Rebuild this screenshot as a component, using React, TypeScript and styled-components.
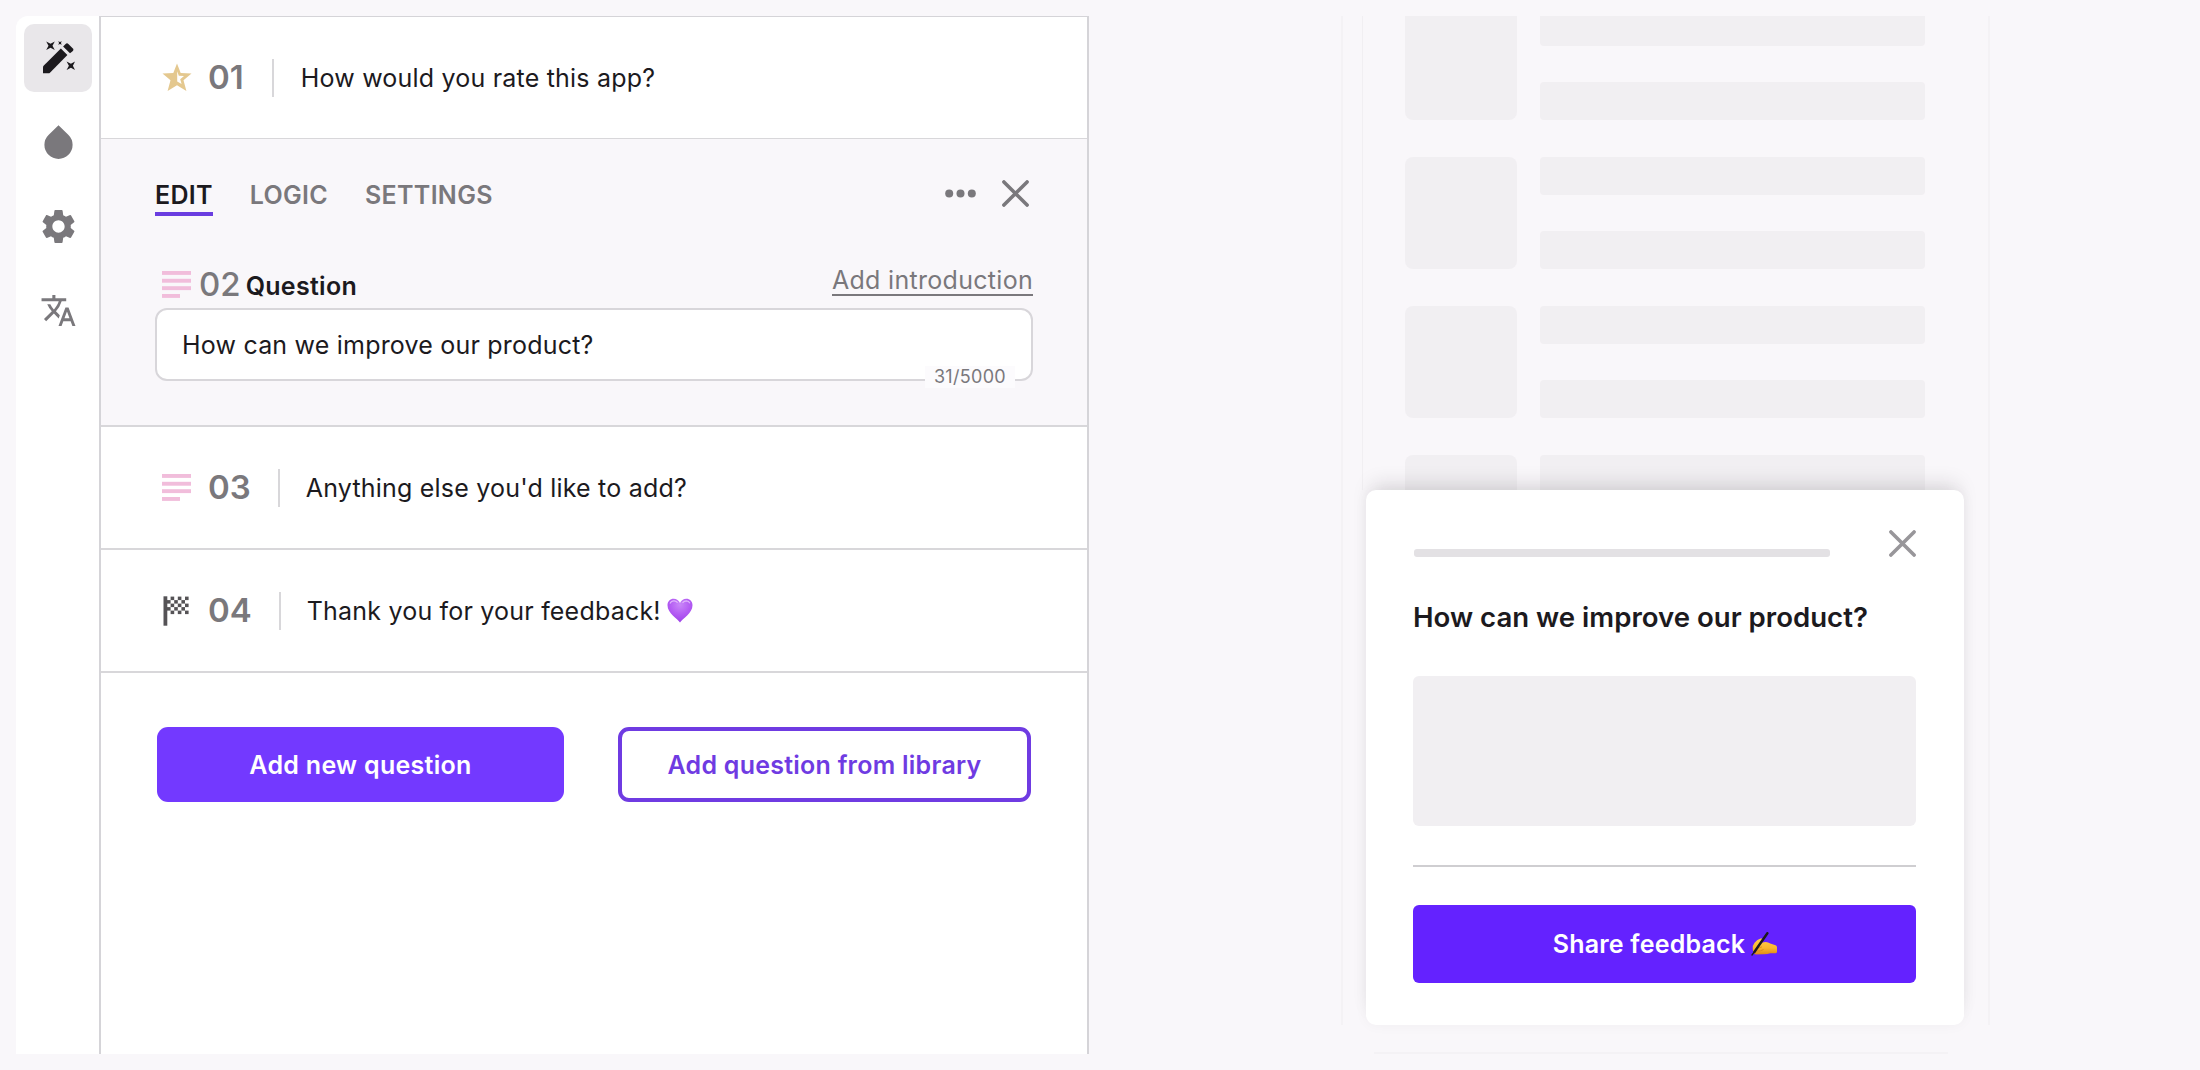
import { ReactNode } from 'react';
import styled, { createGlobalStyle } from 'styled-components';
import { MdSettings, MdTranslate } from 'react-icons/md';

// Data
const TABS = ['EDIT', 'LOGIC', 'SETTINGS'];
const FEED_ROWS = [0, 1, 2, 3];
const FLAG_ROWS = [0, 1, 2, 3, 4];
const FLAG_COLS = [0, 1, 2, 3, 4, 5];

// Icons
const WandIcon = () => (
  <svg width="34" height="34" viewBox="0 0 34 34" fill="#1c1a1e">
    <path d="M2 32.3V26.2Q2 25.4 2.6 24.8L19.9 7.6L26.4 14.1L9.2 31.4Q8.3 32.3 7.4 32.3Z" />
    <path d="M22.1 5.4L24.6 2.9Q26 1.7 27.4 2.9L31.9 7.4Q33.1 8.8 31.9 10.1L29 12.2Z" />
    <path d="M5.2 0.4L9.5 2.7L13.8 0.4L11.5 4.7L13.8 9L9.5 6.7L5.2 9L7.5 4.7Z" />
    <path d="M17.2 0.2L19 1.1L20.8 0.2L19.9 2L20.8 3.8L19 2.9L17.2 3.8L18.1 2Z" />
    <path d="M25.6 20.5L29.9 22.8L34 20.5L31.9 24.8L34 29L29.9 26.8L25.6 29L27.9 24.8Z" />
  </svg>
);

const DropIcon = () => (
  <svg width="29" height="34" viewBox="0 0 29 34" fill="#7a787c">
    <path d="M14.5 0.2L24.5 9.9A14.1 14.1 0 1 1 4.5 9.9Z" />
  </svg>
);

const StarIcon = () => (
  <svg width="30" height="29" viewBox="0 0 30 29">
    <path
      d="M15 0.5L18.7 9.9L29.5 10.4L21.5 17.3L24.4 28L15 22.2L5.6 28L8.5 17.3L0.5 10.4L11.3 9.9Z"
      fill="#e4c88f"
    />
    <path d="M15.2 8.2L16.8 12.7L22 13L18.2 16.2L19.6 21L15.2 18.4Z" fill="#fff" />
  </svg>
);

const LinesIcon = () => (
  <svg width="29" height="27" viewBox="0 0 29 27" fill="#f1bddb">
    <rect width="29" height="3.9" />
    <rect y="7.8" width="29" height="3.9" />
    <rect y="15.2" width="29" height="3.9" />
    <rect y="23" width="18" height="3.9" />
  </svg>
);

const FlagIcon = () => (
  <svg width="29" height="30" viewBox="0 0 29 30" fill="#555356">
    <rect x="1.5" y="0.3" width="3.8" height="29.4" />
    {FLAG_ROWS.map((row) =>
      FLAG_COLS.filter((col) => (row + col) % 2 === 1).map((col) => (
        <rect key={`${row}-${col}`} x={5 + col * 3.6} y={0.6 + row * 3.5} width="3.6" height="3.5" />
      ))
    )}
  </svg>
);

const HeartIcon = () => (
  <svg width="26" height="25" viewBox="0 0 26 25" role="img" aria-label="purple heart">
    <defs>
      <radialGradient id="heart" cx="0.5" cy="0.25" r="0.75">
        <stop offset="0" stopColor="#c987f8" />
        <stop offset="0.55" stopColor="#b35bf3" />
        <stop offset="1" stopColor="#9d41e8" />
      </radialGradient>
    </defs>
    <path
      d="M13 24.5C10.5 20.5 0.5 15.5 0.5 7.3C0.5 3.4 3.3 0.8 6.7 0.8C9.6 0.8 11.9 2.4 13 5C14.1 2.4 16.4 0.8 19.3 0.8C22.7 0.8 25.5 3.4 25.5 7.3C25.5 15.5 15.5 20.5 13 24.5Z"
      fill="url(#heart)"
    />
    <path d="M3 5.4Q4.3 2.6 7.2 2.8Q9.6 3 10.6 4.8" fill="none" stroke="#dfb4fb" strokeWidth="1.2" />
    <path d="M15.5 4.8Q17 2.8 19.4 2.8Q21.8 3 22.9 5.2" fill="none" stroke="#dfb4fb" strokeWidth="1.2" />
  </svg>
);

const WritingHandIcon = () => (
  <svg width="27" height="24" viewBox="0 0 27 24" role="img" aria-label="writing hand">
    <defs>
      <linearGradient id="hand" x1="0" y1="0" x2="0" y2="1">
        <stop offset="0" stopColor="#ffd04a" />
        <stop offset="0.6" stopColor="#fbb82c" />
        <stop offset="1" stopColor="#dd8a16" />
      </linearGradient>
    </defs>
    <path
      d="M1.8 17.4Q1.2 13.4 3.6 10.8Q6.2 7.6 9.6 6.6Q12.6 6 12.4 8Q12 9.6 10.6 10.8L12.8 10.2Q16.2 9.2 19.2 11.4L24.6 13.2Q26 13.8 26 15.4V20Q26 21 24.6 21.2L19.4 21.2Q16 22.4 12 22.2L4.6 22.4Q2.4 22 2.8 20Q1.8 19 1.8 17.4Z"
      fill="url(#hand)"
    />
    <path d="M11 14.8Q8.6 16.2 5.4 16M12.6 17.6Q9.6 19.4 5.6 19" fill="none" stroke="#d98a1b" strokeWidth="0.9" />
    <path d="M16.4 1.2L8 13.2L3.4 20" fill="none" stroke="#1c1a1e" strokeWidth="2.4" strokeLinecap="round" />
    <path d="M3.6 19.6L1 23" fill="none" stroke="#1c1a1e" strokeWidth="1.4" strokeLinecap="round" />
  </svg>
);

const CloseIcon = ({ color }: { color: string }) => (
  <svg width="27" height="27" viewBox="0 0 27 27" stroke={color} strokeWidth="3.6" strokeLinecap="round">
    <path d="M1.9 1.9L25.1 25.1M25.1 1.9L1.9 25.1" />
  </svg>
);

const DotsIcon = () => (
  <svg width="31" height="9" viewBox="0 0 31 9" fill="#7a787c">
    <circle cx="4.2" cy="4.5" r="4" />
    <circle cx="15.5" cy="4.5" r="4" />
    <circle cx="26.8" cy="4.5" r="4" />
  </svg>
);

// Collapsed question
interface QuestionProps {
  icon: ReactNode;
  no: string;
  text: string;
  first?: boolean;
  emoji?: ReactNode;
}

const Question = ({ icon, no, text, first, emoji }: QuestionProps) => (
  <QuestionRow $first={first}>
    <IconCell>{icon}</IconCell>
    <RowNumber>{no}</RowNumber>
    <RowDivider $first={first} />
    <RowText>{text}</RowText>
    {emoji}
  </QuestionRow>
);

export default function App() {
  return (
    <>
      <GlobalStyle />
      <Page>
        <SideBar>
          <SideButton $active>
            <WandIcon />
          </SideButton>
          <SideButton>
            <DropIcon />
          </SideButton>
          <SideButton>
            <MdSettings size={41} />
          </SideButton>
          <SideButton>
            <MdTranslate size={37} />
          </SideButton>
        </SideBar>

        <Editor>
          <Question icon={<StarIcon />} no="01" text="How would you rate this app?" first />
          <EditBlock>
            <TabBar>
              {TABS.map((tab, i) => (
                <Tab key={tab} $active={i === 0}>
                  {tab}
                </Tab>
              ))}
              <TabActions>
                <DotsIcon />
                <CloseIcon color="#7a787c" />
              </TabActions>
            </TabBar>
            <FieldHead>
              <LinesIcon />
              <FieldNumber>02</FieldNumber>
              <FieldLabel>Question</FieldLabel>
              <IntroLink>Add introduction</IntroLink>
            </FieldHead>
            <Field>
              How can we improve our product?
              <Counter>31/5000</Counter>
            </Field>
          </EditBlock>
          <Question icon={<LinesIcon />} no="03" text="Anything else you'd like to add?" />
          <Question icon={<FlagIcon />} no="04" text="Thank you for your feedback!" emoji={<HeartIcon />} />
          <ButtonBlock>
            <AddButton>Add new question</AddButton>
            <LibraryButton>Add question from library</LibraryButton>
          </ButtonBlock>
        </Editor>

        <Preview>
          <Phone>
            <Screen>
              {FEED_ROWS.map((row) => (
                <FeedRow key={row} $first={row === 0}>
                  <Thumb />
                  <Bars>
                    <Bar />
                    <Bar />
                  </Bars>
                </FeedRow>
              ))}
            </Screen>
            <Card>
              <CardHead>
                <Progress />
                <CloseIcon color="#98969a" />
              </CardHead>
              <CardTitle>How can we improve our product?</CardTitle>
              <Answer />
              <CardLine />
              <ShareButton>
                Share feedback
                <WritingHandIcon />
              </ShareButton>
            </Card>
            <PhoneEdge />
          </Phone>
        </Preview>
      </Page>
    </>
  );
}

const GlobalStyle = createGlobalStyle`
  * {
    box-sizing: border-box;
  }
  body {
    margin: 0;
    background: #f9f7fa;
    color: #1c1a1e;
    font-family: Inter, 'Liberation Sans', sans-serif;
  }
  svg {
    display: block;
    flex-shrink: 0;
  }
  button {
    padding: 0;
    border: 0;
    font-family: inherit;
    white-space: nowrap;
  }
`;

const Page = styled.main`
  display: flex;
  width: 2200px;
  height: 1070px;
  padding: 16px 0 16px 16px;
  overflow: hidden;
`;

const SideBar = styled.nav`
  display: flex;
  flex-direction: column;
  align-items: center;
  gap: 16px;
  width: 83px;
  padding: 8px 0 0 1px;
  background: #fff;
  border-radius: 12px 0 0 0;
`;

const SideButton = styled.button<{ $active?: boolean }>`
  display: flex;
  align-items: center;
  justify-content: center;
  width: 68px;
  height: 68px;
  border-radius: 10px;
  background: ${({ $active }) => ($active ? '#e9e7ea' : 'transparent')};
  color: #7a787c;
`;

const Editor = styled.section`
  width: 990px;
  background: #fff;
  border: solid #d5d4d8;
  border-width: 1px 2px 0;
`;

const QuestionRow = styled.div<{ $first?: boolean }>`
  display: flex;
  align-items: center;
  height: ${({ $first }) => ($first ? 122 : 123)}px;
  padding-left: 61px;
  border-bottom: ${({ $first }) => ($first ? 1 : 2)}px solid #d8d7da;
`;

const IconCell = styled.div`
  width: 46px;
`;

const RowNumber = styled.span`
  padding-bottom: 2px;
  color: #7a787c;
  font-size: 33px;
  font-weight: 600;
`;

const RowDivider = styled.i<{ $first?: boolean }>`
  width: 2px;
  height: 38px;
  margin: ${({ $first }) => ($first ? '0 27px 0 28px' : '0 26px 0 27px')};
  background: #d8d7da;
`;

const RowText = styled.span`
  margin-right: 6px;
  font-size: 25px;
  letter-spacing: 0.2px;
`;

const EditBlock = styled.div`
  height: 288px;
  padding: 37px 54px 0;
  background: #f9f7fa;
  border-bottom: 2px solid #d8d7da;
`;

const TabBar = styled.div`
  display: flex;
  gap: 37px;
  height: 40px;
`;

const Tab = styled.span<{ $active?: boolean }>`
  padding-top: 2px;
  color: ${({ $active }) => ($active ? '#1c1a1e' : '#7a787c')};
  border-bottom: 4px solid ${({ $active }) => ($active ? '#6a3de0' : 'transparent')};
  font-size: 25px;
  font-weight: 600;
  letter-spacing: 0.3px;
  line-height: 34px;
`;

const TabActions = styled.div`
  display: flex;
  align-items: center;
  gap: 26px;
  height: 35px;
  margin: 0 4px 0 auto;
`;

const FieldHead = styled.div`
  display: flex;
  align-items: center;
  height: 56px;
  margin-top: 36px;
  padding: 9px 0 0 7px;
`;

const FieldNumber = styled.span`
  margin-left: 8px;
  padding-bottom: 2px;
  color: #7a787c;
  font-size: 33px;
  font-weight: 500;
`;

const FieldLabel = styled.span`
  margin: 2px 0 0 5px;
  font-size: 25px;
  font-weight: 600;
  letter-spacing: 0.3px;
`;

const IntroLink = styled.span`
  margin: 0 0 7px auto;
  color: #7a787c;
  border-bottom: 2px solid #7a787c;
  font-size: 25px;
  letter-spacing: 0.3px;
  line-height: 28px;
`;

const Field = styled.div`
  position: relative;
  display: flex;
  align-items: center;
  height: 73px;
  padding-left: 25px;
  background: #fff;
  border: 2px solid #d8d6da;
  border-radius: 12px;
  font-size: 25px;
  letter-spacing: 0.2px;
`;

/* sits on the bottom border of the field */
const Counter = styled.span`
  position: absolute;
  right: 16px;
  bottom: -9px;
  padding: 0 9px;
  background: #fcfbfd;
  color: #7a787c;
  font-size: 18px;
  letter-spacing: 0.3px;
  line-height: 22px;
`;

const ButtonBlock = styled.div`
  display: flex;
  justify-content: space-between;
  padding: 54px 56px 0;
`;

const AddButton = styled.button`
  width: 407px;
  height: 75px;
  border-radius: 11px;
  background: #7339ff;
  color: #fff;
  font-size: 25px;
  font-weight: 600;
  letter-spacing: 0.3px;
`;

const LibraryButton = styled(AddButton)`
  width: 413px;
  background: #fff;
  border: 4px solid #6f3be2;
  color: #6f3be2;
  letter-spacing: 0.25px;
`;

const Preview = styled.section`
  flex: 1;
  padding-left: 252px;
`;

const Phone = styled.div`
  width: 649px;
  height: 1009px;
  padding: 0 25px 0 19px;
  border: solid #f4f2f5;
  border-width: 0 2px;
`;

const Screen = styled.div`
  height: 474px;
  padding: 0 38px 0 42px;
  overflow: hidden;
  border-left: 1px solid #f1eff2;
`;

const FeedRow = styled.div<{ $first?: boolean }>`
  display: flex;
  gap: 23px;
  height: 112px;
  margin: ${({ $first }) => ($first ? '-8px' : '0')} 0 37px;
`;

const Thumb = styled.div`
  width: 112px;
  border-radius: 8px;
  background: #f1eff2;
`;

const Bars = styled.div`
  display: flex;
  flex: 1;
  flex-direction: column;
  justify-content: space-between;
`;

const Bar = styled.div`
  height: 38px;
  border-radius: 4px;
  background: #f1eff2;
`;

const Card = styled.article`
  position: relative;
  width: 598px;
  height: 535px;
  margin-left: 4px;
  padding: 40px 48px 0 47px;
  border-radius: 10px;
  background: #fff;
  box-shadow: 0 -12px 20px -6px rgba(28, 26, 30, 0.13), 0 0 14px rgba(28, 26, 30, 0.04);
`;

const CardHead = styled.div`
  display: flex;
  align-items: center;
  justify-content: space-between;
  height: 27px;
`;

const Progress = styled.div`
  width: 416px;
  height: 8px;
  margin: 19px 0 0 1px;
  border-radius: 3px;
  background: #e3e1e4;
`;

const CardTitle = styled.h2`
  margin: 42px 0 0;
  font-size: 27.6px;
  font-weight: 600;
  line-height: 36px;
  white-space: nowrap;
`;

const Answer = styled.div`
  height: 150px;
  margin-top: 41px;
  border-radius: 6px;
  background: #f1eff2;
`;

const CardLine = styled.hr`
  height: 2px;
  margin: 39px 0 38px;
  border: 0;
  background: #cfced1;
`;

const ShareButton = styled.button`
  display: flex;
  align-items: center;
  justify-content: center;
  gap: 6px;
  width: 100%;
  height: 78px;
  padding-left: 2px;
  border-radius: 6px;
  background: #6422ff;
  color: #fff;
  font-size: 25px;
  font-weight: 600;
  letter-spacing: 0.2px;
`;

const PhoneEdge = styled.div`
  height: 2px;
  margin: 27px 15px 0 12px;
  background: #f4f2f5;
`;
